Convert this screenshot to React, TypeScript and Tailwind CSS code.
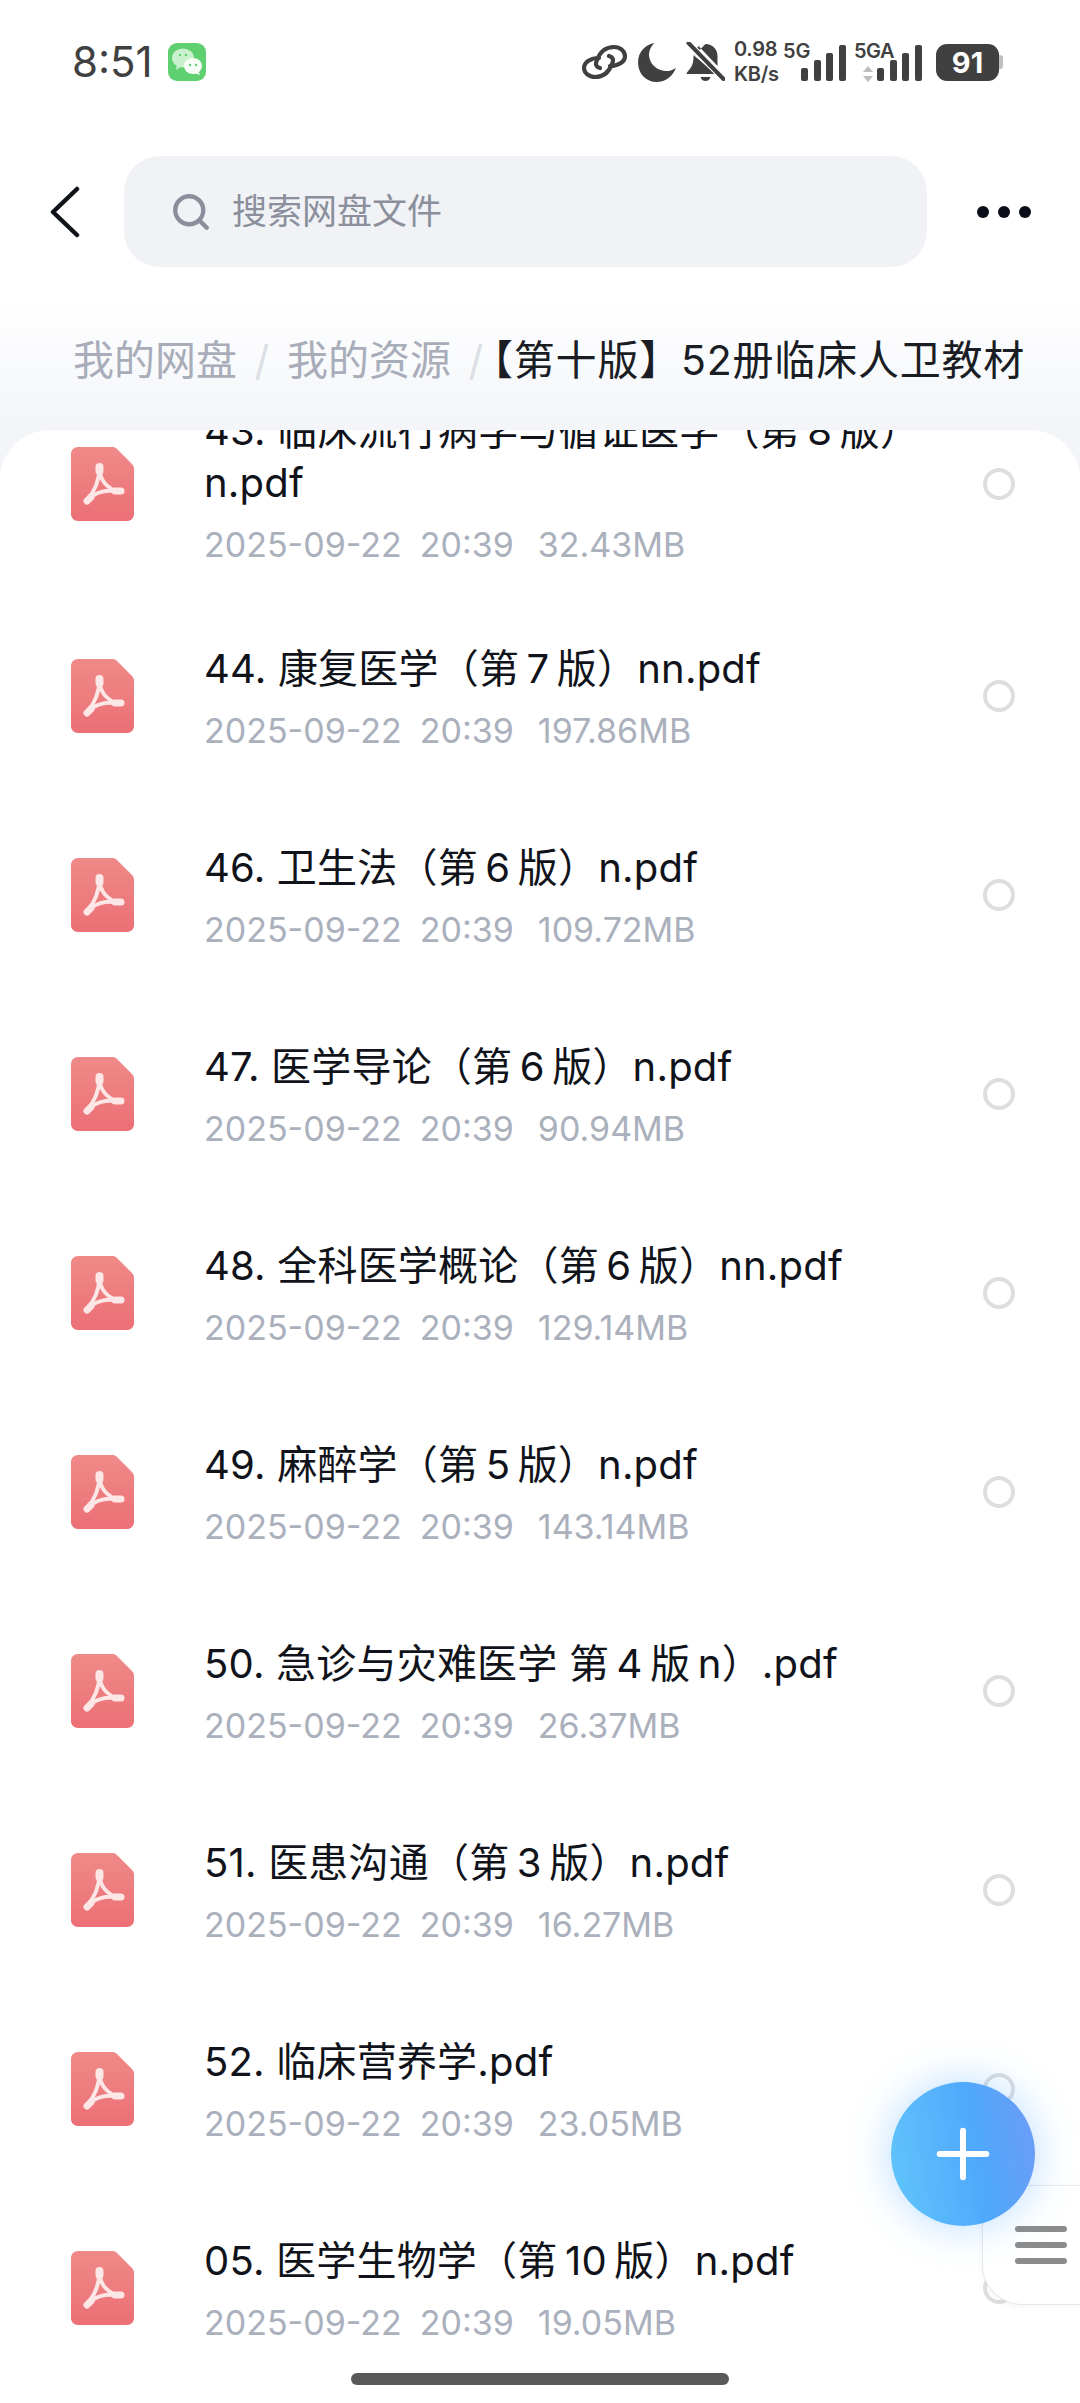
import { Search, Plus } from 'lucide-react';

const files = [
  { name: '43. 临床流行病学与循证医学（第\u20098\u2009版）n.pdf', size: '32.43MB' },
  { name: '44. 康复医学（第\u20097\u2009版）nn.pdf', size: '197.86MB' },
  { name: '46. 卫生法（第\u20096\u2009版）n.pdf', size: '109.72MB' },
  { name: '47. 医学导论（第\u20096\u2009版）n.pdf', size: '90.94MB' },
  { name: '48. 全科医学概论（第\u20096\u2009版）nn.pdf', size: '129.14MB' },
  { name: '49. 麻醉学（第\u20095\u2009版）n.pdf', size: '143.14MB' },
  { name: '50. 急诊与灾难医学 第\u20094\u2009版\u2009n）.pdf', size: '26.37MB' },
  { name: '51. 医患沟通（第\u20093\u2009版）n.pdf', size: '16.27MB' },
  { name: '52. 临床营养学.pdf', size: '23.05MB' },
  { name: '05. 医学生物学（第\u200910\u2009版）n.pdf', size: '19.05MB' },
];

function PdfIcon() {
  return (
    <svg viewBox="0 0 63 74" className="w-[63px] h-[74px] shrink-0">
      <defs>
        <linearGradient id="pdfFill" x1="0" y1="0" x2="0" y2="1">
          <stop offset="0" stopColor="#ef8a88" />
          <stop offset="1" stopColor="#ec6f76" />
        </linearGradient>
      </defs>
      <path d="M7 0H41C43 0 44.500 .6 46 2L61 17C62.400 18.500 63 20 63 22V67C63 71 60 74 56 74H7C3 74 0 71 0 67V7C0 3 3 0 7 0Z" fill="url(#pdfFill)" />
      <g fill="none" stroke="#fde6e6" strokeLinecap="round">
        <path d="M28.500 22C28 33 24 44 16 53" strokeWidth="4" />
        <path d="M28.500 22C29 32 35 41 48 45" strokeWidth="4" />
        <path d="M16 53C24 45 36 42 48 45" strokeWidth="4" />
        <path d="M28.500 20V24" strokeWidth="8" />
        <path d="M16 54L20 50" strokeWidth="7" />
        <path d="M44 44H50" strokeWidth="7" />
      </g>
    </svg>
  );
}

function Signal({ className }: { className?: string }) {
  return (
    <svg viewBox="0 0 45 36" className={className} fill="#404040">
      <rect x="0" y="23" width="7" height="13" rx="2" />
      <rect x="13" y="15" width="7" height="21" rx="2" />
      <rect x="25" y="8" width="7" height="28" rx="2" />
      <rect x="38" y="0" width="7" height="36" rx="2" />
    </svg>
  );
}

function StatusBar() {
  return (
    <div className="h-[124px] shrink-0 flex items-center pl-[72px] text-[#404040]">
      <span className="text-[42px] leading-none w-[96px]">8:51</span>
      <svg viewBox="0 0 38 38" className="w-[38px] h-[38px]">
        <rect width="38" height="38" rx="9" fill="#5fd06f" />
        <ellipse cx="15" cy="15" rx="11" ry="9.500" fill="#c9f1cd" />
        <path d="M9 21L8 27L14 23Z" fill="#c9f1cd" />
        <ellipse cx="25" cy="23" rx="9" ry="8" fill="#f6fdf6" />
        <path d="M30 28L32 32L26 30Z" fill="#f6fdf6" />
        <circle cx="22" cy="22" r="1.200" fill="#5fd06f" />
        <circle cx="28" cy="22" r="1.200" fill="#5fd06f" />
        <circle cx="12" cy="12" r="1.200" fill="#5fd06f" />
        <circle cx="18" cy="12" r="1.200" fill="#5fd06f" />
      </svg>
      <div className="ml-[376px] flex items-center">
        <svg viewBox="0 0 45 36" className="w-[45px] h-[36px]" fill="none" stroke="#404040" strokeWidth="4.200" strokeLinecap="round">
          <path d="M18 24C14 23 13 20 15 16C18 8 24 3 32 3C38 3 43 7 43 12C43 18 36 22 28 22" />
          <path d="M27 12C31 13 32 16 30 20C27 28 21 33 13 33C7 33 2 29 2 24C2 18 9 14 17 14" />
        </svg>
        <svg viewBox="0 0 38 38" className="ml-[10px] w-[39px] h-[39px]" fill="#404040">
          <path d="M17 0C9 1 1 8 1 19C1 30 9 38 19 38C28 38 35 32 38 24C34 27 30 28 26 27C18 26 13 20 12 14C11 9 13 4 17 0Z" />
        </svg>
        <svg viewBox="0 0 38 40" className="ml-[10px] w-[39px] h-[40px]" fill="#404040">
          <path d="M19 2C12 2 8 7 8 14L30 32H0C0 30 3 28 4 26C6 23 7 20 7 14ZM19 2C26 2 31 7 31 14V24L12 4C14 3 16 2 19 2Z" />
          <path d="M14 35H24C23 38 21 39 19 39C17 39 15 38 14 35Z" />
          <path d="M1 1L37 36" stroke="#ffffff" strokeWidth="7" />
          <path d="M2 1L37 37" stroke="#404040" strokeWidth="4" strokeLinecap="round" />
        </svg>
        <div className="ml-[9px] w-[51px] flex flex-col font-semibold text-[20px] leading-[25px] tracking-[-0.3px]">
          <span>0.98</span>
          <span>KB/s</span>
        </div>
        <div className="relative w-[61px] h-[40px]">
          <span className="absolute -left-[2px] top-[-3px] font-semibold text-[20px] leading-[25px]">5G</span>
          <Signal className="absolute right-0 bottom-[1px] w-[45px] h-[36px]" />
        </div>
        <div className="relative ml-[8px] w-[68px] h-[40px]">
          <span className="absolute left-0 top-[-3px] font-semibold text-[20px] leading-[25px] tracking-[-0.5px]">5GA</span>
          <svg viewBox="0 0 10 16" className="absolute left-[9px] bottom-0 w-[10px] h-[16px]" fill="#bdbdbd">
            <path d="M5 0L10 6H0Z" />
            <path d="M0 10H10L5 16Z" />
          </svg>
          <Signal className="absolute right-0 bottom-[1px] w-[45px] h-[36px]" />
        </div>
        <div className="ml-[14px] flex items-center">
          <div className="w-[63px] h-[37px] rounded-[11px] bg-[#404040] flex items-center justify-center text-white font-bold text-[29px] leading-none">
            91
          </div>
          <div className="w-[4px] h-[14px] rounded-r-[3px] bg-[#bfbfbf]" />
        </div>
      </div>
    </div>
  );
}

export default function App() {
  return (
    <div className="relative h-[2403px] w-[1080px] overflow-hidden flex flex-col bg-white font-['Inter','Noto_Sans_CJK_SC',sans-serif]">
      <StatusBar />

      <div className="mt-[32px] h-[111px] shrink-0 flex items-center">
        <svg viewBox="0 0 30 52" className="ml-[50px] w-[30px] h-[52px]" fill="none" stroke="#0f1218" strokeWidth="4.500" strokeLinecap="round" strokeLinejoin="round">
          <path d="M27 3L3 26L27 49" />
        </svg>
        <div className="ml-[44px] w-[803px] h-[111px] rounded-[36px] bg-[#f0f2f6] flex items-center pl-[46px]">
          <Search className="w-[42px] h-[42px] text-[#8a8f9b]" strokeWidth={2.500} />
          <span className="ml-[20px] text-[35px] text-[#8a8f9b]">搜索网盘文件</span>
        </div>
        <div className="ml-[50px] flex gap-[9px]">
          <div className="w-[12px] h-[12px] rounded-full bg-[#0b0e18]" />
          <div className="w-[12px] h-[12px] rounded-full bg-[#0b0e18]" />
          <div className="w-[12px] h-[12px] rounded-full bg-[#0b0e18]" />
        </div>
      </div>

      <div className="flex-1 min-h-0 flex flex-col bg-[linear-gradient(to_bottom,#ffffff_0px,#ffffff_30px,#f3f5f9_163px)]">
        <div className="h-[163px] shrink-0 pt-[67px] pl-[73px] flex items-start text-[41px] leading-[52px] whitespace-nowrap text-[#a8adb9]">
          <span>我的网盘</span>
          <span className="w-[50px] text-center text-[#dcdfe5]">/</span>
          <span>我的资源</span>
          <span className="w-[50px] text-center text-[#dcdfe5]">/</span>
          <span className="-ml-[29px] tracking-[0.8px] text-[#1a1d24]">【第十版】52册临床人卫教材</span>
        </div>

        <div className="flex-1 min-h-0 rounded-t-[50px] bg-white overflow-hidden">
          <div className="-mt-[58px]">
            {files.map((file) => (
              <div key={file.name} className="min-h-[199px] py-[29px] flex items-center pl-[71px] pr-[65px]">
                <PdfIcon />
                <div className="ml-[70px] pt-[4px] flex-1 min-w-0">
                  <div className="text-[40px] leading-[52px] tracking-[0.2px] text-[#10131a]">{file.name}</div>
                  <div className="mt-[14px] flex gap-[24px] text-[34px] leading-[44px] text-[#aab0bc]">
                    <span className="flex gap-[18px]">
                      <span>2025-09-22</span>
                      <span>20:39</span>
                    </span>
                    <span>{file.size}</span>
                  </div>
                </div>
                <div className="ml-[20px] w-[32px] h-[32px] shrink-0 rounded-full border-[4px] border-[#dedede]" />
              </div>
            ))}
          </div>
        </div>
      </div>

      <div className="absolute right-0 top-[2185px] w-[98px] h-[120px] rounded-l-[40px] bg-white border border-r-0 border-[#e8e8e8] flex flex-col justify-center pl-[32px] gap-[10px] shadow-[0_2px_6px_rgba(0,0,0,0.04)]">
        <div className="w-[52px] h-[6px] rounded-full bg-[#8c8c8c]" />
        <div className="w-[52px] h-[6px] rounded-full bg-[#8c8c8c]" />
        <div className="w-[52px] h-[6px] rounded-full bg-[#8c8c8c]" />
      </div>

      <div className="absolute left-[891px] top-[2082px] w-[144px] h-[144px] rounded-full bg-[linear-gradient(80deg,#62c6fb_0%,#4fa8fc_60%,#6f9bf5_100%)] shadow-[0_0_40px_rgba(80,170,255,0.4)] flex items-center justify-center">
        <Plus className="w-[80px] h-[80px] text-white" strokeWidth={1.8} />
      </div>

      <div className="absolute left-[351px] top-[2373px] w-[378px] h-[12px] rounded-full bg-[#595959]" />
    </div>
  );
}
